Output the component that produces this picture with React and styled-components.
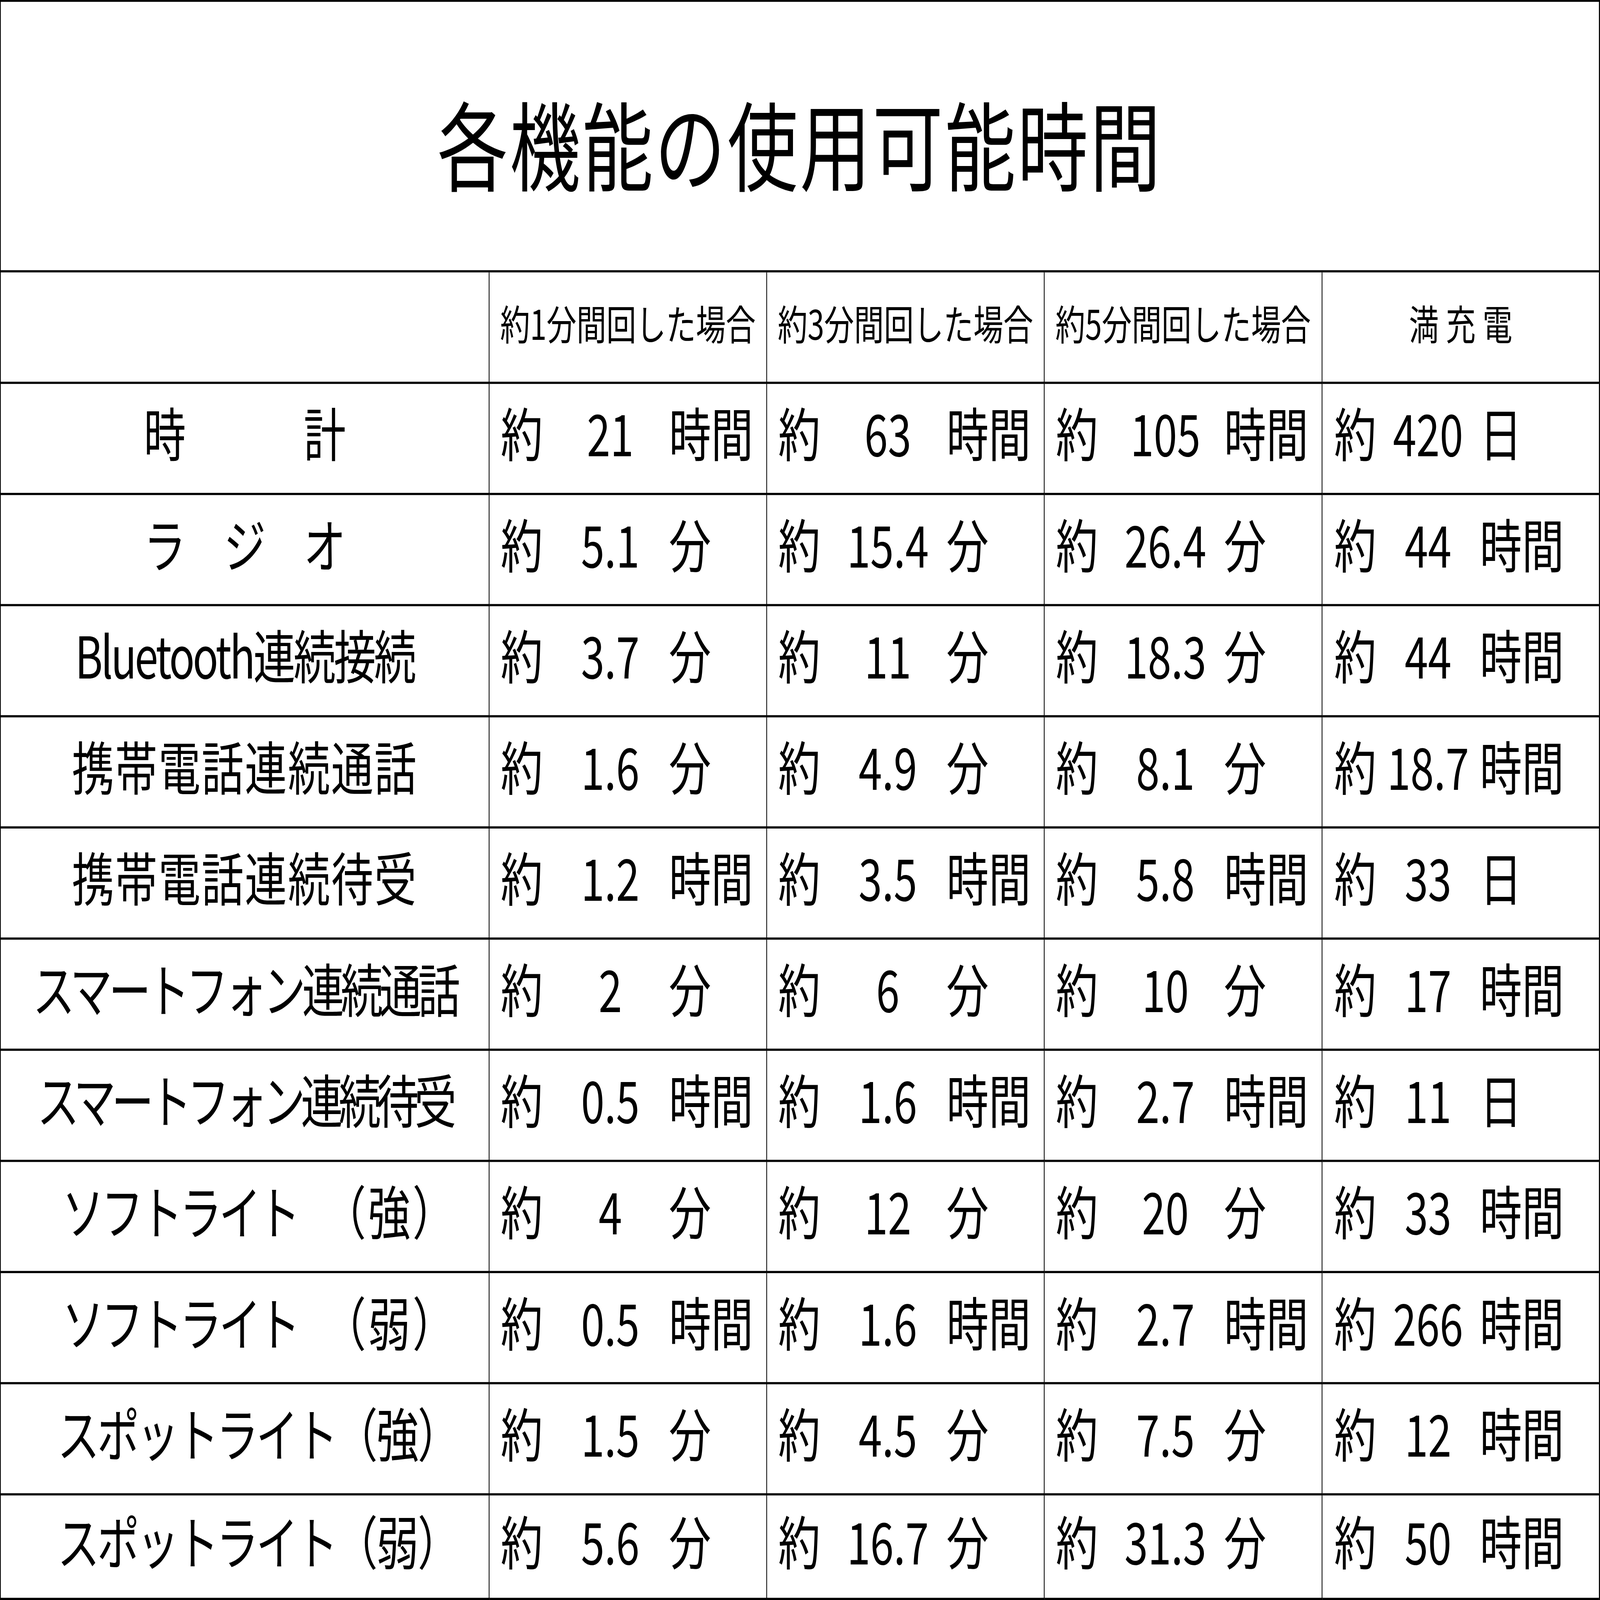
import styled, { createGlobalStyle } from "styled-components";
import { useEffect, useState } from "react";

const DESIGN_W = 6001
const DESIGN_H = 4376

const GlobalStyle = createGlobalStyle`
    html, body {
        margin: 0;
        padding: 0;
        background: #fff;
        overflow: hidden;
    }
    body {
        font-family: "Noto Sans CJK JP", "Noto Sans", sans-serif;
        color: #000;
    }
`

const Viewport = styled.div`
    width: 100vw;
    height: 100vh;
    overflow: hidden;
    background: #fff;
`

const Stage = styled.div`
    width: ${DESIGN_W}px;
    height: ${DESIGN_H}px;
    transform-origin: 0 0;
`

const Sheet = styled.div`
    width: ${DESIGN_W}px;
    height: ${DESIGN_H}px;
    box-sizing: border-box;
    border-top: 5px solid #000;
    border-left: 3px solid #000;
    border-right: 4px solid #000;
    display: grid;
    grid-template-columns: 1833px 1041px 1041px 1042px 1fr;
    grid-template-rows: 740px 305px repeat(10, 304px) 1fr;
    background: #fff;
    font-weight: 400;
`

const Title = styled.div`
    grid-column: 1 / -1;
    border-bottom: 6px solid #000;
    display: flex;
    align-items: center;
    justify-content: center;
    padding-top: 28px;
    font-size: 265px;
    line-height: 1;
    letter-spacing: 7px;
    white-space: nowrap;
`

const Cell = styled.div`
    box-sizing: border-box;
    border-bottom: 6px solid #000;
    border-right: ${p => p.$last ? 'none' : '3px solid #000'};
    display: flex;
    align-items: center;
    justify-content: center;
    padding-bottom: 38px;
    min-width: 0;
    overflow: hidden;
`

const HeadCell = styled(Cell)`
    font-size: 112px;
    line-height: 1;
    padding-bottom: 30px;
    padding-left: ${p => p.$tracking || 0}px;
    white-space: nowrap;
    letter-spacing: ${p => p.$tracking || 0}px;
`

const NameText = styled.span`
    font-size: 158px;
    line-height: 1;
    white-space: nowrap;
    letter-spacing: ${p => p.$tracking || 0}px;
    padding-left: ${p => p.$shift || 0}px;
    display: inline-flex;
    align-items: center;
`

const Tail = styled.span`
    letter-spacing: ${p => p.$tracking || 0}px;
`

const SpreadText = styled.span`
    display: flex;
    justify-content: space-between;
    width: ${p => p.$width}px;
    font-size: 158px;
    line-height: 1;
`

const Gap = styled.span`
    display: inline-block;
    width: ${p => p.$w}px;
`

const ValueCell = styled(Cell)`
    display: grid;
    justify-content: start;
    align-items: center;
    grid-template-columns: ${p => p.$compact ? '158px 388px' : '191px 440px'} auto;
    padding-left: ${p => p.$compact ? 44 : 42}px;
    font-size: 158px;
    line-height: 1;
    white-space: nowrap;
`

const Num = styled.span`
    text-align: center;
`

const rows = [
    { name: { spread: ['時', '計'] }, vals: [['21', '時間'], ['63', '時間'], ['105', '時間'], ['420', '日']] },
    { name: { spread: ['ラ', 'ジ', 'オ'] }, vals: [['5.1', '分'], ['15.4', '分'], ['26.4', '分'], ['44', '時間']] },
    { name: { text: 'Bluetooth連続接続', tracking: -7 }, vals: [['3.7', '分'], ['11', '分'], ['18.3', '分'], ['44', '時間']] },
    { name: { text: '携帯電話連続通話', tracking: 4 }, vals: [['1.6', '分'], ['4.9', '分'], ['8.1', '分'], ['18.7', '時間']] },
    { name: { text: '携帯電話連続待受', tracking: 4 }, vals: [['1.2', '時間'], ['3.5', '時間'], ['5.8', '時間'], ['33', '日']] },
    { name: { text: 'スマートフォン連続通話', tracking: -13 }, vals: [['2', '分'], ['6', '分'], ['10', '分'], ['17', '時間']] },
    { name: { text: 'スマートフォン連続待受', tracking: -16 }, vals: [['0.5', '時間'], ['1.6', '時間'], ['2.7', '時間'], ['11', '日']] },
    { name: { text: 'ソフトライト', tail: '（強）', gap: 100, tracking: -11, tailTracking: 8, shift: 110 }, vals: [['4', '分'], ['12', '分'], ['20', '分'], ['33', '時間']] },
    { name: { text: 'ソフトライト', tail: '（弱）', gap: 100, tracking: -11, tailTracking: 8, shift: 110 }, vals: [['0.5', '時間'], ['1.6', '時間'], ['2.7', '時間'], ['266', '時間']] },
    { name: { text: 'スポットライト', tail: '（強）', gap: 0, tracking: -9, tailTracking: -4, shift: 100 }, vals: [['1.5', '分'], ['4.5', '分'], ['7.5', '分'], ['12', '時間']] },
    { name: { text: 'スポットライト', tail: '（弱）', gap: 0, tracking: -9, tailTracking: -4, shift: 100 }, vals: [['5.6', '分'], ['16.7', '分'], ['31.3', '分'], ['50', '時間']] },
]

const headers = ['約1分間回した場合', '約3分間回した場合', '約5分間回した場合']

function Name({ name }) {
    if (name.spread) {
        return <SpreadText $width={758}>
            {name.spread.map((c, i) => <span key={i}>{c}</span>)}
        </SpreadText>
    }
    return <NameText $tracking={name.tracking} $shift={name.shift}>
        {name.text}
        {name.tail && name.gap > 0 && <Gap $w={name.gap} />}
        {name.tail && <Tail $tracking={name.tailTracking}>{name.tail}</Tail>}
    </NameText>
}

function Row({ row }) {
    return <>
        <Cell><Name name={row.name} /></Cell>
        {row.vals.map(([num, unit], i) => (
            <ValueCell key={i} $compact={i === 3} $last={i === 3}>
                <span>約</span>
                <Num>{num}</Num>
                <span>{unit}</span>
            </ValueCell>
        ))}
    </>
}

// the sheet is drawn at its native size and fitted to whatever window it lands in
const readScale = () => ({
    x: document.documentElement.clientWidth / DESIGN_W,
    y: document.documentElement.clientHeight / DESIGN_H,
})

export default function App() {
    const [scale, setScale] = useState(readScale)

    useEffect(() => {
        const onResize = () => setScale(readScale())
        window.addEventListener('resize', onResize)
        return () => window.removeEventListener('resize', onResize)
    }, [])

    return <>
        <GlobalStyle />
        <Viewport>
            <Stage style={{ transform: `scale(${scale.x}, ${scale.y})` }}>
                <Sheet>
                    <Title>各機能の使用可能時間</Title>

                    <Cell />
                    {headers.map(h => <HeadCell key={h}>{h}</HeadCell>)}
                    <HeadCell $last $tracking={26}>満充電</HeadCell>

                    {rows.map((row, r) => <Row key={r} row={row} />)}
                </Sheet>
            </Stage>
        </Viewport>
    </>
}
